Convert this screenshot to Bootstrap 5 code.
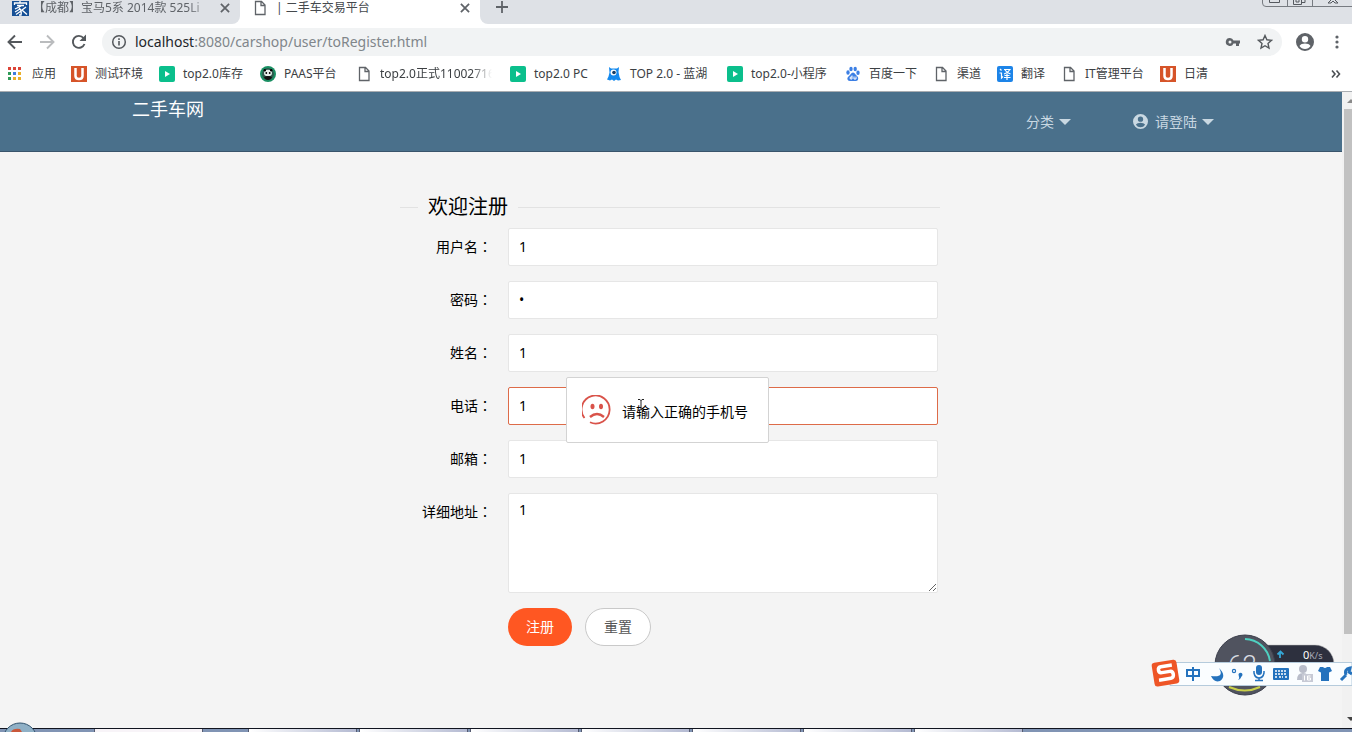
<!DOCTYPE html>
<html lang="zh-CN">
<head>
<meta charset="utf-8">
<meta name="viewport" content="width=device-width, initial-scale=1">
<title>二手车交易平台</title>
<link href="https://cdn.jsdelivr.net/npm/bootstrap@5.3.0/dist/css/bootstrap.min.css" rel="stylesheet">
<style>
body{font:14px/20px "Noto Sans","Noto Sans CJK SC",sans-serif;color:#000;background:#fff}
svg{display:block;flex:none}
button{font-family:inherit}
.bare{border:0;background:none;padding:0;color:#5f6368}
/* browser chrome */
.strip{height:24px;font-size:12px;line-height:14px;color:#5f6368}
.tab-cell{width:240px;padding:0 8px 8px 12px}
.tab-idle{background:#dee1e6;border-bottom-right-radius:8px}
.tab-open{color:#45494d}
.tab-free{background:#dee1e6;border-bottom-left-radius:8px;padding:0 0 10px 16px}
.fade-end{-webkit-mask-image:linear-gradient(90deg,#000 85%,transparent);mask-image:linear-gradient(90deg,#000 85%,transparent)}
.win-btns{right:0;top:0}
.tools{height:36px;padding:0 6px;gap:14px}
.omni{height:28px;border-radius:14px;background:#f1f3f4;padding:0 9px;gap:8px}
.addr{color:#80868b;font-size:14px}
.marks{display:grid;grid-template-columns:63px 88px 101px 96px 154px 96px 121px 118px 88px 64px 64px 99px 1fr 18px;height:32px;padding:0 3px 3px 8px;border-bottom:1px solid #a9adb1;font-size:12px;line-height:18px}
.marks a{color:#3c4043;text-decoration:none;display:flex;align-items:center;gap:8px;white-space:nowrap;overflow:hidden}
.marks .long{margin-right:18px}
/* page */
.page{background:#f4f4f4}
.topbar{height:60px;background:#4a708b;border-bottom:1px solid #39546b;padding:0 128px 0 132px}
.brand{color:#fff;font-size:18px;line-height:34px;text-decoration:none}
.menus{gap:62px}
.menu-link{color:#c9d8e2;text-decoration:none;line-height:60px;gap:5px}
.menu-link .who{margin-right:2px}
.reg{width:542px;max-width:100%;margin:0 auto;padding:41px 2px 0 0}
.heading{font-size:20px;line-height:28px;gap:10px;margin-bottom:7px}
.heading::before,.heading::after{content:"";height:1px;background:#e2e2e2;width:18px}
.heading::after{flex:1}
.line{display:grid;grid-template-columns:92px 1fr;column-gap:16px;margin-bottom:15px;padding-right:2px}
.line label{text-align:right;line-height:38px;white-space:nowrap}
.line .form-control{height:38px;border:1px solid #e6e6e6;border-radius:2px;padding:0 10px 2px;font-size:14px;line-height:20px;color:#000;box-shadow:none}
.line textarea.form-control{height:100px;padding:6px 10px}
.line .form-control.wrong{border-color:#dd6b48}
.tip{left:58px;top:-10px;width:203px;height:66px;background:#fff;border:1px solid #d3d3d3;border-radius:2px;padding:0 0 1px 15px;gap:10px;z-index:3;white-space:nowrap}
.ibeam{left:70px;top:20px}
.acts{padding-left:108px;gap:13px}
.acts .btn{height:38px;border-radius:19px;font-size:14px;line-height:20px;padding:0 18px}
.acts .go{background:#ff5722;color:#fff;border:0}
.acts .redo{background:#fff;color:#555;border:1px solid #c9c9c9}
.scroller{width:10px;background:#f1f1f1;padding-left:2px}
.thumb{margin-top:17px;height:82.5%;background:#c1c1c1}
/* desktop overlays */
.speed{right:16px;bottom:36px;z-index:4}
.ime{right:0;bottom:43px;z-index:5}
.task{height:4px;background:#8094b4;border-top:1px solid #10141f;padding-left:94px}
.win{width:109px;height:3px;margin-right:2px;background:linear-gradient(90deg,#fff,#b4bad2);border:1px solid #555b70;border-width:0 1px}
.win-a{margin-right:45px;background:#f8f4f8}
.orb{left:3px;bottom:0;z-index:3}
</style>
</head>
<body class="vh-100 d-flex flex-column overflow-hidden position-relative">
<svg width="0" height="0" class="position-absolute">
<symbol id="doc" viewBox="0 0 16 16"><path d="M3.500 1.500h6l3.500 3.500v9.500h-9.500zM9 1.500v4h4" fill="none" stroke="#5f6368" stroke-width="1.300"/></symbol>
<symbol id="shut" viewBox="0 0 12 12"><path d="M2.500 2.500l7 7M9.500 2.500l-7 7" stroke="#5f6368" stroke-width="1.500"/></symbol>
<symbol id="ured" viewBox="0 0 16 16"><path d="M0 0h16v16H0z" fill="#d65429"/><path d="M4.500 2v8q0 3 3.500 3t3.500-3V2" fill="none" stroke="#fff" stroke-width="2.500"/></symbol>
<symbol id="play" viewBox="0 0 16 16"><rect width="16" height="16" rx="2" fill="#0bbf8c"/><path d="M6 5l5 3-5 3z" fill="#fff"/></symbol>
<symbol id="person" viewBox="0 0 18 18"><path fill-rule="evenodd" fill="currentColor" d="M9 0a9 9 0 1 0 0 18A9 9 0 0 0 9 0zm0 3a3.200 3.200 0 1 1 0 6.400A3.200 3.200 0 0 1 9 3zm0 13a6.500 6.500 0 0 1-5.500-3c.5-1.700 3.500-2.500 5.500-2.500s5 .8 5.500 2.500A6.500 6.500 0 0 1 9 16z"/></symbol>
</svg>

<header class="flex-shrink-0">
<div class="strip d-flex position-relative">
  <div class="tab-cell tab-idle d-flex align-items-center">
    <svg width="17" height="15" viewBox="0 0 17 15"><path d="M0 0h17v15H0z" fill="#165096"/><path d="M2.500 4V2h12v2M8 0v2M5 4.500h7M9 5L3 8M7 7q3 2 2 7H7M8 8l-5 3M9 10l-5 3.500M14 6l-4 3 5 4.500" fill="none" stroke="#fff" stroke-width="1.300"/></svg>
    <span class="fade-end text-nowrap overflow-hidden ms-1 me-1 flex-grow-1">【成都】宝马5系 2014款 525Li</span>
    <button class="bare" aria-label="关闭标签页"><svg width="14" height="14"><use href="#shut"/></svg></button>
  </div>
  <div class="tab-cell tab-open d-flex align-items-center">
    <svg width="16" height="16"><use href="#doc"/></svg>
    <span class="ms-1 ps-1 flex-grow-1">| 二手车交易平台</span>
    <button class="bare" aria-label="关闭标签页"><svg width="14" height="14"><use href="#shut"/></svg></button>
  </div>
  <div class="tab-free flex-grow-1 d-flex align-items-center">
    <button class="bare" aria-label="新标签页"><svg width="12" height="12" viewBox="0 0 12 12"><path d="M6 0v12M0 6h12" stroke="#5f6368" stroke-width="1.800"/></svg></button>
  </div>
  <svg class="win-btns position-absolute" width="90" height="8" viewBox="0 0 90 8"><path d="M.5 0v3q0 3.500 3.500 3.500h86M25.500 0v6M50.500 0v6" fill="none" stroke="#777b81"/><path d="M7.500 0v2.500h10V0M31.500 0v4.500h8V0M34 0v2h3V0M40 2.500h3V0" fill="none" stroke="#55595f"/><path d="M66 3l3-3M76 3l-3-3M66 3h3l2-2 2 2h3" fill="none" stroke="#55595f"/></svg>
</div>
<div class="tools d-flex align-items-center">
  <button class="bare" aria-label="后退"><svg width="18" height="18" viewBox="0 0 18 18"><path d="M16 9H3M9 2.500L2.500 9 9 15.500" fill="none" stroke="#54585c" stroke-width="1.900"/></svg></button>
  <button class="bare" aria-label="前进"><svg width="18" height="18" viewBox="0 0 18 18"><path d="M2 9h13M9 2.500L15.500 9 9 15.500" fill="none" stroke="#babcbe" stroke-width="1.900"/></svg></button>
  <button class="bare" aria-label="刷新"><svg width="18" height="18" viewBox="0 0 18 18"><path d="M14.500 11A6 6 0 1 1 13.500 5" fill="none" stroke="#54585c" stroke-width="1.900"/><path d="M16 1.500V8H9.500z" fill="#54585c"/></svg></button>
  <div class="omni flex-grow-1 d-flex align-items-center">
    <svg width="16" height="16" viewBox="0 0 16 16"><circle cx="8" cy="8" r="6.300" fill="none" stroke="#54585c" stroke-width="1.500"/><path d="M8 7v4.500M8 4.300V6" stroke="#54585c" stroke-width="1.600"/></svg>
    <div class="addr flex-grow-1"><span class="text-dark">localhost</span>:8080/carshop/user/toRegister.html</div>
    <svg width="16" height="16" viewBox="0 0 16 16"><path fill="#5f6368" fill-rule="evenodd" d="M5 4a4 4 0 1 0 3.500 5.500H11V12h3V9.500h1v-3H8.500A4 4 0 0 0 5 4zm0 2.500a1.500 1.500 0 1 1 0 3 1.500 1.500 0 0 1 0-3z"/></svg>
    <svg class="ms-2" width="16" height="16" viewBox="0 0 16 16"><path d="M8 1.500l1.900 4.300 4.600.5-3.500 3.100 1 4.700L8 11.700l-4 2.400 1-4.700L1.500 6.300l4.600-.5z" fill="none" stroke="#54585c" stroke-width="1.400"/></svg>
  </div>
  <button class="bare" aria-label="用户"><svg width="18" height="18"><use href="#person"/></svg></button>
  <button class="bare" aria-label="菜单"><svg width="18" height="18" viewBox="0 0 18 18" fill="#5f6368"><circle cx="9" cy="4" r="1.600"/><circle cx="9" cy="9" r="1.600"/><circle cx="9" cy="14" r="1.600"/></svg></button>
</div>
<nav class="marks" aria-label="书签">
  <a href="#"><svg width="16" height="16" viewBox="0 0 16 16"><path d="M0 1h3v3H0zM5 1h3v3H5zM10 1h3v3h-3z" fill="#dc4437"/><path d="M0 6h3v3H0zM0 11h3v3H0z" fill="#2f9b57"/><path d="M5 6h3v3H5z" fill="#3f7de0"/><path d="M10 6h3v3h-3zM5 11h3v3H5zM10 11h3v3h-3z" fill="#eab02a"/></svg>应用</a>
  <a href="#"><svg width="16" height="16"><use href="#ured"/></svg>测试环境</a>
  <a href="#"><svg width="16" height="16"><use href="#play"/></svg>top2.0库存</a>
  <a href="#"><svg width="16" height="16" viewBox="0 0 16 16"><circle cx="8" cy="8" r="8" fill="#1a8f63"/><circle cx="8" cy="8" r="6" fill="#2d5a4d"/><ellipse cx="8" cy="7" rx="4" ry="3.200" fill="#e6eeea"/><circle cx="4.800" cy="4.300" r="1.200"/><circle cx="11.200" cy="4.300" r="1.200"/><circle cx="6.300" cy="7" r=".9"/><circle cx="9.700" cy="7" r=".9"/><path d="M4 11q4-2 8 0-1 3-4 3t-4-3" fill="#111"/></svg>PAAS平台</a>
  <a href="#" class="long fade-end"><svg width="16" height="16"><use href="#doc"/></svg>top2.0正式110027163</a>
  <a href="#"><svg width="16" height="16"><use href="#play"/></svg>top2.0 PC</a>
  <a href="#"><svg width="16" height="16" viewBox="0 0 16 16"><path d="M3 1l2 1.500h6L13 1l-.5 5 1 5 1.500 3-3 .5-2-1-2 1.500-2-1.500-2 1-3-1 1.500-3 1-4z" fill="#1389ee"/><circle cx="7.500" cy="6.500" r="3" fill="#fff"/><circle cx="8" cy="6.500" r="1.800" fill="#143b63"/></svg>TOP 2.0 - 蓝湖</a>
  <a href="#"><svg width="16" height="16"><use href="#play"/></svg>top2.0-小程序</a>
  <a href="#"><svg width="16" height="16" viewBox="0 0 16 16" fill="#3c7fe4"><ellipse cx="3" cy="6.500" rx="1.700" ry="2.200"/><ellipse cx="6" cy="3" rx="1.700" ry="2.200"/><ellipse cx="10.200" cy="3" rx="1.700" ry="2.200"/><ellipse cx="13" cy="6.800" rx="1.700" ry="2.200"/><path d="M8 6.500c2 0 2.500 2.500 4 3.500 2 1.500 1.500 5-1 5-1 0-5 0-6 0-3 0-3.500-3.500-1-5C5.500 9 6 6.500 8 6.500z"/><path d="M7 9.500V13H5.500q-1-1 0-2H7M9 10.500V13h2v-2.500" fill="none" stroke="#fff"/></svg>百度一下</a>
  <a href="#"><svg width="16" height="16"><use href="#doc"/></svg>渠道</a>
  <a href="#"><svg width="16" height="16" viewBox="0 0 16 16"><rect width="16" height="16" rx="2" fill="#1d84e8"/><path d="M3 3l1.500 1.500M2.500 7h2v5l1.500-1.500M7 3.500h6Q11 7 7 8M8 4q2 3 5.500 4M7.500 9.500h5M7 11.500h6.500M10 8v6" fill="none" stroke="#fff" stroke-width="1.200"/></svg>翻译</a>
  <a href="#"><svg width="16" height="16"><use href="#doc"/></svg>IT管理平台</a>
  <a href="#"><svg width="16" height="16"><use href="#ured"/></svg>日清</a>
  <a href="#" aria-label="更多书签"><svg width="12" height="10" viewBox="0 0 12 10"><path d="M1 1.500L4 5 1 8.500M5.500 1.500l3 3.500-3 3.500" fill="none" stroke="#4c5054" stroke-width="1.600"/></svg></a>
</nav>
</header>

<div class="d-flex flex-grow-1 overflow-hidden">
<div class="page flex-grow-1 overflow-hidden">
  <nav class="topbar d-flex justify-content-between">
    <a class="brand" href="#">二手车网</a>
    <div class="menus d-flex">
      <a class="menu-link d-flex align-items-center" href="#">分类 <svg width="12" height="6" viewBox="0 0 12 6"><path d="M0 0h12L6 6z" fill="#c9d8e2"/></svg></a>
      <a class="menu-link d-flex align-items-center" href="#"><svg class="who" width="15" height="15"><use href="#person"/></svg>请登陆 <svg width="12" height="6" viewBox="0 0 12 6"><path d="M0 0h12L6 6z" fill="#c9d8e2"/></svg></a>
    </div>
  </nav>
  <form class="reg">
    <h1 class="heading d-flex align-items-center fw-normal">欢迎注册</h1>
    <div class="line"><label for="u">用户名<span lang="zh-TW">：</span></label><input id="u" class="form-control" type="text" value="1"></div>
    <div class="line"><label for="p">密码<span lang="zh-TW">：</span></label><input id="p" class="form-control" type="password" value="1"></div>
    <div class="line"><label for="n">姓名<span lang="zh-TW">：</span></label><input id="n" class="form-control" type="text" value="1"></div>
    <div class="line"><label for="t">电话<span lang="zh-TW">：</span></label>
      <div class="position-relative"><input id="t" class="form-control wrong" type="text" value="1">
        <div class="tip position-absolute d-flex align-items-center" role="alert">
          <svg width="30" height="30" viewBox="0 0 30 30"><path d="M2.500 23A14 14 0 1 1 8 27.300" fill="none" stroke="#d9534a" stroke-width="1.800"/><ellipse cx="10.500" cy="11.500" rx="2" ry="2.800" fill="#d9534a"/><ellipse cx="19" cy="11.500" rx="2" ry="2.800" fill="#d9534a"/><path d="M8 22q7-6 14 0" fill="none" stroke="#d9534a" stroke-width="2.400"/></svg>
          <span class="pt-1">请输入正确的手机号</span>
          <svg class="ibeam position-absolute" width="8" height="14" viewBox="0 0 8 14"><path d="M1 1.500h2l1 1 1-1h2M4 2v10M1 12.500h2l1-1 1 1h2" fill="none" stroke="#222"/></svg>
        </div>
      </div></div>
    <div class="line"><label for="e">邮箱<span lang="zh-TW">：</span></label><input id="e" class="form-control" type="text" value="1"></div>
    <div class="line"><label for="a">详细地址<span lang="zh-TW">：</span></label><textarea id="a" class="form-control">1</textarea></div>
    <div class="acts d-flex"><button class="btn go" type="button">注册</button><button class="btn redo" type="reset">重置</button></div>
  </form>
</div>
<div class="scroller flex-shrink-0 d-flex flex-column position-relative">
  <svg class="position-absolute top-0 end-0" width="8" height="17" viewBox="0 0 8 17"><path d="M3 11l4-4 4 4z" fill="#8a8a8a"/></svg>
  <div class="thumb"></div>
  <svg class="position-absolute bottom-0 end-0" width="8" height="17" viewBox="0 0 8 17"><path d="M3 6l4 4 4-4z" fill="#444"/></svg>
</div>
</div>

<footer class="task d-flex flex-shrink-0">
  <div class="win win-a"></div><div class="win"></div><div class="win"></div><div class="win"></div><div class="win"></div><div class="win"></div><div class="win"></div><div class="win"></div>
</footer>
<svg class="orb position-absolute" width="34" height="10" viewBox="0 0 34 10"><circle cx="17" cy="18" r="17" fill="#8fb0c6" stroke="#31536e"/><path d="M8 10q2-4 9-3l2 3z" fill="#c9573a"/></svg>

<svg class="speed position-absolute" width="122" height="62" viewBox="0 0 122 62">
  <rect x="36" y="11" width="84" height="38" rx="19" fill="#2d303e" stroke="#bbb" stroke-opacity=".5"/>
  <circle cx="31" cy="31" r="30" fill="#50535f" stroke="#3c3f4c"/>
  <path d="M31 5A26 26 0 0 1 56 27" fill="none" stroke="#4fd0c0" stroke-width="2"/><path d="M15 53Q31 60 46 53" fill="none" stroke="#c9cf4a" stroke-width="2"/>
  <text x="14" y="40" font-size="26" font-family="Roboto,sans-serif" font-weight="300" fill="#d8dbe2">62</text>
  <path d="M66 24v-5M63.500 20.500l3-3 3 3" fill="none" stroke="#35a8d8" stroke-width="1.800"/>
  <text x="89" y="25" font-size="11" fill="#fff">0<tspan font-size="9" fill="#a9acb8">K/s</tspan></text>
</svg>
<svg class="ime position-absolute" width="202" height="32" viewBox="0 0 202 32">
  <path d="M20 5.500h182v23H20z" fill="#fafdff" stroke="#b5cbdc"/>
  <g transform="rotate(-9 16 16)"><rect x="3" y="4" width="25" height="24" rx="3" fill="#ee5526"/><path d="M23 9H12q-3 0-3 3t3 3h8q3 0 3 3.500T20 22H8" fill="none" stroke="#fff" stroke-width="3.500"/></g>
  <path d="M37 13h12v6H37zM43 10v14" fill="none" stroke="#2472bd" stroke-width="2"/>
  <path d="M69 11q6 10-8 8 3 7 9 5 7-5-1-13z" fill="#2472bd"/>
  <circle cx="84" cy="14" r="1.600" fill="none" stroke="#2472bd" stroke-width="1.200"/><path d="M88.500 17.500a2 2 0 1 1 3 2q-1 3-3.500 3.500 2-2 1-3z" fill="#2472bd"/>
  <rect x="106" y="8" width="6" height="10" rx="3" fill="#2472bd"/><path d="M104 14v2q1 5 5 5t5-5v-2M109 21v2.500M105 23.500h8" fill="none" stroke="#2472bd" stroke-width="1.500"/>
  <rect x="123" y="11" width="16" height="12" rx="1" fill="#2472bd"/><path d="M125 14h12M125 17h12M125 20h2M129 20h4M135 20h2" stroke="#fff" stroke-width="1.500" stroke-dasharray="2 1"/>
  <circle cx="153" cy="12" r="4" fill="#b9bdca"/><path d="M147 23q0-7 6-7t6 7z" fill="#b9bdca"/><rect x="152" y="17" width="11" height="8" fill="#c7cad5"/><path d="M154.500 18.500v5M160.500 19h-3v4h3v-2h-3" fill="none" stroke="#fff"/>
  <path d="M170 10h3q2 2 4 0h3l2 4-3 1.500V24h-8v-8.500L168 14z" fill="#2472bd"/>
  <path d="M191 23l5-5M196 18q-2-6 4-7l-1 4 3 2" fill="none" stroke="#2472bd" stroke-width="3"/>
</svg>
<script src="https://cdn.jsdelivr.net/npm/bootstrap@5.3.0/dist/js/bootstrap.bundle.min.js"></script>
</body>
</html>
